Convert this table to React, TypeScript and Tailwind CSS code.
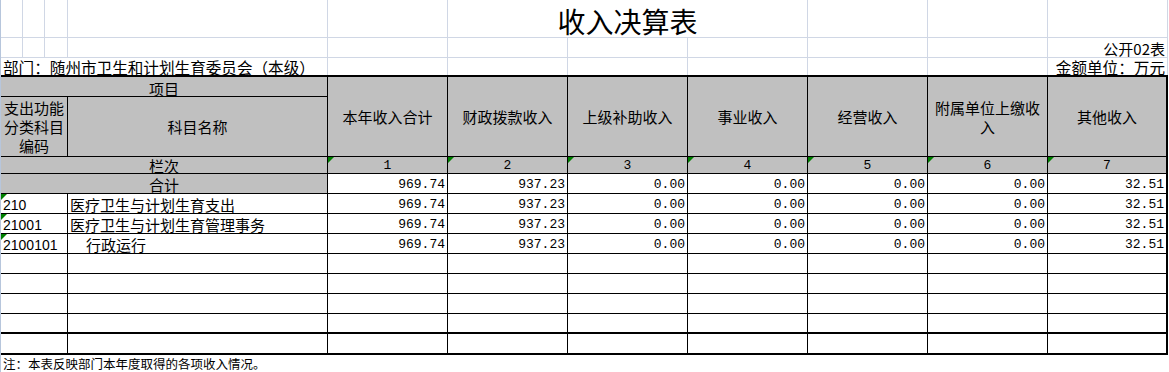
const heads = ['本年收入合计', '财政拨款收入', '上级补助收入', '事业收入', '经营收入', '附属单位上缴收入', '其他收入'];
const amounts = ['969.74', '937.23', '0.00', '0.00', '0.00', '0.00', '32.51'];

const items = [
  { code: '210', name: '医疗卫生与计划生育支出', indent: false },
  { code: '21001', name: '医疗卫生与计划生育管理事务', indent: false },
  { code: '2100101', name: '行政运行', indent: true },
];

// Excel 的绿色小三角（文本格式数字）
function Flag() {
  return <span className="absolute left-0 top-0 h-0 w-0 border-t-[6px] border-r-[6px] border-t-[#008000] border-r-transparent" />;
}

function AmountCells({ last }: { last?: boolean }) {
  return (
    <>
      {amounts.map((v, i) => (
        <div
          key={i}
          className={
            (i < 6 ? 'border-r ' : '') +
            'flex items-center justify-end border-b border-black pr-[2px] pt-[2px] font-["Liberation_Mono",monospace] text-[13px] leading-none'
          }
        >
          {last ? '' : v}
        </div>
      ))}
    </>
  );
}

function EmptyRow({ thick, bottom }: { thick?: boolean; bottom?: boolean }) {
  const b = bottom ? '' : thick ? 'border-b-2 ' : 'border-b ';
  return (
    <>
      <div className={b + 'border-r border-black'} />
      <div className={b + 'border-r border-black'} />
      {heads.map((_, i) => (
        <div key={i} className={b + (i < 6 ? 'border-r ' : '') + 'border-black'} />
      ))}
    </>
  );
}

export default function App() {
  return (
    <div className="h-[372px] w-[1169px] overflow-hidden border-l border-[#b7c6dc] bg-white font-['Noto_Sans_CJK_SC',sans-serif] text-black">
      {/* 标题行 */}
      <div className="grid h-[38px] grid-cols-[22px_22px_23px_260px_120px_360px_120px_120px_120px]">
        <div className="border-r border-b border-[#d0d7e5]" />
        <div className="border-r border-b border-[#d0d7e5]" />
        <div className="border-r border-b border-[#d0d7e5]" />
        <div className="border-r border-b border-[#d0d7e5]" />
        <div className="border-r border-b border-[#d0d7e5]" />
        <div className="flex justify-center border-r border-b border-[#d0d7e5] pt-[7px] text-[28px] leading-none">收入决算表</div>
        <div className="border-r border-b border-[#d0d7e5]" />
        <div className="border-r border-b border-[#d0d7e5]" />
        <div className="border-r border-b border-[#d0d7e5]" />
      </div>
      <div className="grid h-[20px] grid-cols-[22px_22px_23px_260px_repeat(7,120px)]">
        <div className="border-r border-b border-[#d0d7e5]" />
        <div className="border-r border-b border-[#d0d7e5]" />
        <div className="border-r border-b border-[#d0d7e5]" />
        <div className="border-r border-b border-[#d0d7e5]" />
        <div className="border-r border-b border-[#d0d7e5]" />
        <div className="border-r border-b border-[#d0d7e5]" />
        <div className="border-r border-b border-[#d0d7e5]" />
        <div className="border-r border-b border-[#d0d7e5]" />
        <div className="border-r border-b border-[#d0d7e5]" />
        <div className="border-r border-b border-[#d0d7e5]" />
        <div className="flex items-end justify-end border-r border-b border-[#d0d7e5] pr-[2px] pb-[1px] text-[15px] leading-[15px]">公开02表</div>
      </div>
      <div className="grid h-[17px] grid-cols-[327px_repeat(7,120px)]">
        <div className="flex items-end border-r border-[#d0d7e5] pl-[2px] text-[15.6px] leading-[15px]">部门：随州市卫生和计划生育委员会（本级）</div>
        <div className="border-r border-[#d0d7e5]" />
        <div className="border-r border-[#d0d7e5]" />
        <div className="border-r border-[#d0d7e5]" />
        <div className="border-r border-[#d0d7e5]" />
        <div className="border-r border-[#d0d7e5]" />
        <div className="border-r border-[#d0d7e5]" />
        <div className="flex items-end justify-end border-r border-[#d0d7e5] pr-[2px] text-[15.6px] leading-[15px]">金额单位：万元</div>
      </div>

      {/* 表格 */}
      <div className="w-[1167px] border-t-2 border-r-2 border-b-2 border-black">
        <div className="grid grid-cols-[67px_260px_repeat(6,120px)_118px] grid-rows-[20px_60px_17px_20px_repeat(7,20px)_19px] text-[15px] leading-none">
          <div className="col-span-2 flex items-center justify-center border-r border-b border-black bg-[#c0c0c0] pt-[3px]">项目</div>
          {heads.map((h, i) => (
            <div
              key={h}
              className={
                (i < 6 ? 'border-r ' : '') +
                'row-span-2 flex items-center justify-center border-b border-black bg-[#c0c0c0] px-[2px] text-center leading-[19px]'
              }
            >
              {h}
            </div>
          ))}
          <div className="flex items-center justify-center border-r border-b border-black bg-[#c0c0c0] text-center leading-[19px]">支出功能分类科目编码</div>
          <div className="flex items-center justify-center border-r border-b border-black bg-[#c0c0c0]">科目名称</div>

          <div className="col-span-2 flex items-center justify-center border-r border-b border-black bg-[#c0c0c0]">栏次</div>
          {heads.map((_, i) => (
            <div
              key={i}
              className={
                (i < 6 ? 'border-r ' : '') +
                'relative flex items-end justify-center border-b border-black bg-[#c0c0c0] pb-[1px] font-["Liberation_Mono",monospace] text-[13px]'
              }
            >
              <Flag />
              {i + 1}
            </div>
          ))}

          <div className="col-span-2 flex items-center justify-center border-r border-b border-black bg-[#c0c0c0] pt-[2px]">合计</div>
          <AmountCells />

          {items.map((it) => (
            <div key={it.code} className="contents">
              <div className="relative flex items-center border-r border-b border-black pl-[2px] pt-[2px] font-['Liberation_Sans',sans-serif] text-[14px]">
                <Flag />
                {it.code}
              </div>
              <div className={(it.indent ? 'pl-[18px] ' : 'pl-[2px] ') + 'flex items-center border-r border-b border-black pt-[2px]'}>{it.name}</div>
              <AmountCells />
            </div>
          ))}

          <EmptyRow />
          <EmptyRow />
          <EmptyRow />
          <EmptyRow thick />
          <EmptyRow bottom />
        </div>
      </div>

      <div className="flex h-[18px] items-center pl-[2px] text-[12.5px] leading-none">注：本表反映部门本年度取得的各项收入情况。</div>
    </div>
  );
}
